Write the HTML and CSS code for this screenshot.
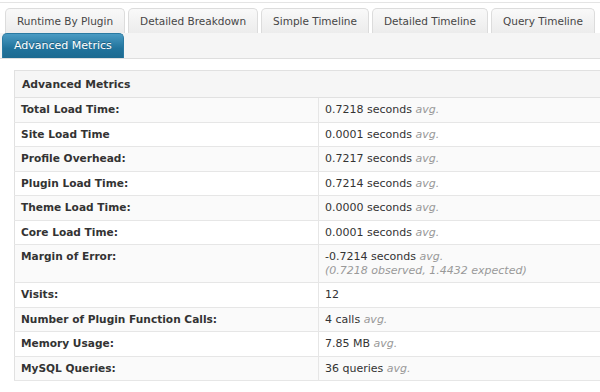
FILE: index.html
```html
<!DOCTYPE html>
<html lang="en">
<head>
    <meta charset="UTF-8">
    <title>Advanced Metrics</title>
    <link rel="stylesheet" href="styles.css">
</head>
<body>
    <div class="wrap">
        <div class="tabs">
            <div class="tab-row">
                <a class="tab">Runtime By Plugin</a>
                <a class="tab">Detailed Breakdown</a>
                <a class="tab">Simple Timeline</a>
                <a class="tab">Detailed Timeline</a>
                <a class="tab">Query Timeline</a>
            </div>
            <div class="tab-row second">
                <a class="tab active">Advanced Metrics</a>
            </div>
        </div>

        <table class="metrics">
            <thead>
                <tr><th colspan="2">Advanced Metrics</th></tr>
            </thead>
            <tbody>
                <tr class="alt"><td class="label">Total Load Time:</td><td>0.7218 seconds <em>avg.</em></td></tr>
                <tr><td class="label">Site Load Time</td><td>0.0001 seconds <em>avg.</em></td></tr>
                <tr class="alt"><td class="label">Profile Overhead:</td><td>0.7217 seconds <em>avg.</em></td></tr>
                <tr><td class="label">Plugin Load Time:</td><td>0.7214 seconds <em>avg.</em></td></tr>
                <tr class="alt"><td class="label">Theme Load Time:</td><td>0.0000 seconds <em>avg.</em></td></tr>
                <tr><td class="label">Core Load Time:</td><td>0.0001 seconds <em>avg.</em></td></tr>
                <tr class="alt"><td class="label">Margin of Error:</td><td>-0.7214 seconds <em>avg.</em><br><em>(0.7218 observed, 1.4432 expected)</em></td></tr>
                <tr><td class="label">Visits:</td><td>12</td></tr>
                <tr class="alt"><td class="label">Number of Plugin Function Calls:</td><td>4 calls <em>avg.</em></td></tr>
                <tr><td class="label">Memory Usage:</td><td>7.85 MB <em>avg.</em></td></tr>
                <tr class="alt"><td class="label">MySQL Queries:</td><td>36 queries <em>avg.</em></td></tr>
            </tbody>
        </table>
    </div>
</body>
</html>
```

FILE: styles.css
```css
body {
    margin: 0;
    background: #fff;
    font-family: "DejaVu Sans", Verdana, sans-serif;
    color: #333;
    overflow: hidden;
}
.wrap {
    border-top: 1px solid #e4e4e4;
    margin-top: 2px;
}
.tabs {
    padding-top: 5px;
}
.tab-row {
    display: flex;
    gap: 3px;
    padding-left: 5px;
}
.tab-row.second {
    padding-left: 2px;
    background: #f5f5f5;
    border-bottom: 1px solid #dedede;
}
.tab {
    display: block;
    height: 24px;
    line-height: 24px;
    padding: 0 11px;
    font-size: 10.5px;
    color: #464646;
    background: linear-gradient(#f9f9f9, #ececec);
    border: 1px solid #dcdcdc;
    border-bottom: none;
    border-radius: 5px 5px 0 0;
}
.tab.active {
    color: #fff;
    font-size: 11px;
    padding: 0 11px;
    border-color: #2a7aa2;
    background: linear-gradient(#4a9bc3, #21739c 60%, #1d6a90);
    text-shadow: 0 -1px 0 rgba(0, 0, 0, 0.3);
}
.metrics {
    margin: 11px 0 0 14px;
    width: 586px;
    border-collapse: collapse;
    font-size: 11px;
    border: 1px solid #e1e1e1;
    border-right: none;
}
.metrics th {
    text-align: left;
    font-size: 10.8px;
    font-weight: bold;
    height: 26px;
    padding: 0 7px;
    background: #f6f6f6;
    border-bottom: 1px solid #e1e1e1;
}
.metrics td {
    line-height: 13.5px;
    padding: 5px 6px;
    border-bottom: 1px solid #e6e6e6;
    background: #fff;
    vertical-align: top;
}
.metrics tr.alt td {
    background: #fafafa;
}
.metrics td.label {
    width: 291px;
    font-size: 10.6px;
    font-weight: bold;
    border-right: 1px solid #e6e6e6;
}
.metrics td em {
    color: #999;
}
```
